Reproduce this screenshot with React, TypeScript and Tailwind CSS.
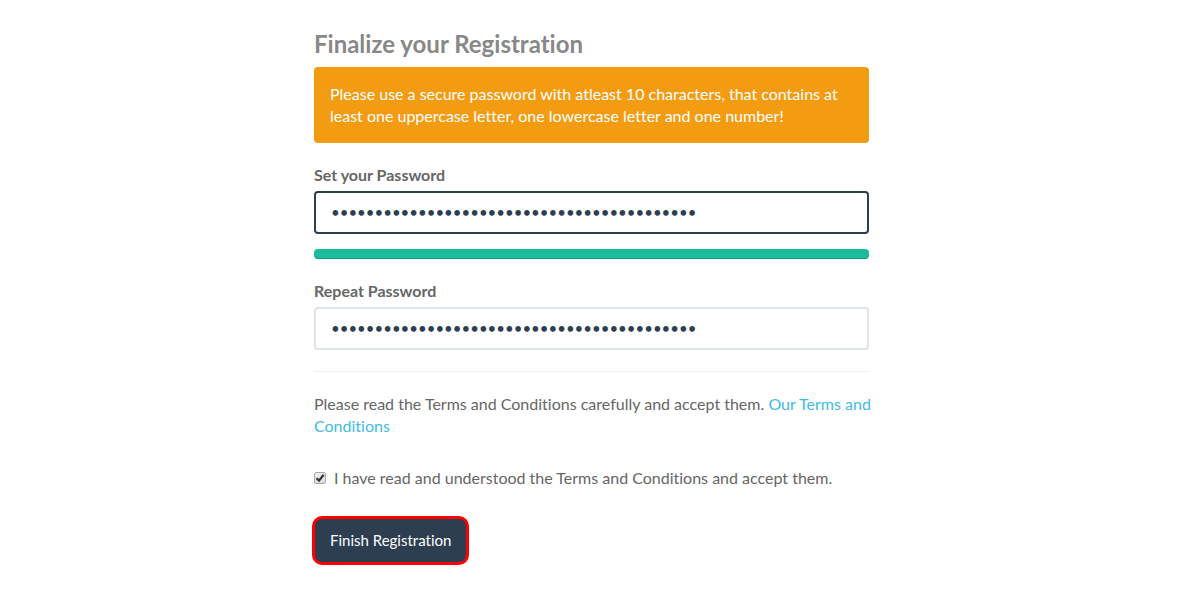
import { useState } from "react";

const inputClass =
  "block w-full h-[43px] rounded-sm border-2 bg-white px-[15px] pb-0.5 text-[15px] text-[#2c3e50] outline-none focus:border-[#2c3e50]";

const App = () => {
  const [password, setPassword] = useState("x".repeat(42));
  const [repeated, setRepeated] = useState("x".repeat(42));
  const [accepted, setAccepted] = useState(true);

  return (
    <main className="min-h-screen bg-white pt-[31px] pr-[17px] pb-8 font-['Lato',sans-serif] text-base leading-[22px] text-[#666666] [font-variant-ligatures:none]">
      <form
        className="mx-auto w-full max-w-[555px]"
        onSubmit={(e) => e.preventDefault()}
      >
        <h1 className="text-2xl leading-[26px] font-bold text-[#888888]">
          Finalize your Registration
        </h1>
        <div className="mt-[10px] rounded-sm bg-[#f39c12] px-4 py-4 text-white">
          Please use a secure password with atleast 10 characters, that contains
          at least one uppercase letter, one lowercase letter and one number!
        </div>

        <label htmlFor="password" className="mt-[21px] mb-[5px] block font-bold">
          Set your Password
        </label>
        <input
          id="password"
          type="password"
          value={password}
          onChange={(e) => setPassword(e.target.value)}
          className={`${inputClass} border-[#2c3e50]`}
        />
        <div className="mt-[15px] h-[10px] rounded-sm bg-[#1abc9c] shadow-[inset_0_-1px_0_rgba(0,0,0,0.15)]" />

        <label htmlFor="repeat" className="mt-[21px] mb-[5px] block font-bold">
          Repeat Password
        </label>
        <input
          id="repeat"
          type="password"
          value={repeated}
          onChange={(e) => setRepeated(e.target.value)}
          className={`${inputClass} border-[#dce4ec]`}
        />

        <hr className="my-[21px] border-[#eeeeee]" />

        <p className="-mr-4">
          Please read the Terms and Conditions carefully and accept them.{" "}
          <a href="#terms" className="text-[#3fbbe4]">
            Our Terms and Conditions
          </a>
        </p>

        <label className="mt-[30px] flex items-center gap-2">
          <span className="grid size-3">
            <input
              type="checkbox"
              checked={accepted}
              onChange={(e) => setAccepted(e.target.checked)}
              className="col-start-1 row-start-1 size-3 appearance-none rounded-xs border border-[#a9a9a9] bg-linear-to-b from-[#eeeeee] to-[#dddddd]"
            />
            {accepted && (
              <svg
                viewBox="0 0 12 12"
                className="pointer-events-none col-start-1 row-start-1 size-3"
                fill="none"
                stroke="#333333"
                strokeWidth="2.2"
              >
                <path d="M2.5 6.2 5 8.6 9.6 2.8" />
              </svg>
            )}
          </span>
          I have read and understood the Terms and Conditions and accept them.
        </label>

        <button
          type="submit"
          className="mt-[27px] -ml-0.5 block h-[49px] rounded-[10px] border-[3px] border-[#ff0000] bg-[#2c3e50] px-[15px] pb-0.5 text-[15px] text-white [font-variant-ligatures:none]"
        >
          Finish Registration
        </button>
      </form>
    </main>
  );
};

export default App;
